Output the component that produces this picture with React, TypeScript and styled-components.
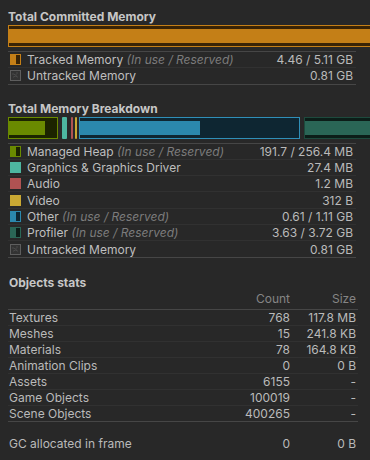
import React from "react";
import styled, { createGlobalStyle } from "styled-components";

const GlobalStyle = createGlobalStyle`
  html, body {
    margin: 0;
    padding: 0;
    background: #282828;
  }
  body {
    font-family: Inter, "Noto Sans", "Liberation Sans", sans-serif;
    font-size: 12px;
    color: #c2c2c2;
  }
`;

type Part = {
  w: number;
  ml?: number;
  color: string;
  dark?: string;
  border?: string;
  fill?: number;
};

const committed: Part[] = [
  { w: 900, color: "#c47f17", dark: "#3a2405", border: "#c47f17", fill: 100 },
];

const breakdown: Part[] = [
  { w: 50, color: "#6a8a00", dark: "#1c2400", border: "#6a8a00", fill: 74 },
  { w: 5, ml: 4, color: "#4db6a0" },
  { w: 2, ml: 4, color: "#b05252" },
  { w: 2, ml: 2, color: "#c9a833" },
  { w: 221, ml: 2, color: "#2b88ad", dark: "#0e2632", border: "#2f8fb8", fill: 55 },
  { w: 744, ml: 4, color: "#2a6656", dark: "#0c1d18", border: "#1d4a3d", fill: 98 },
];

type Legend = {
  label: string;
  note?: boolean;
  value: string;
  icon: { color: string; dark?: string } | "untracked";
};

const tracked: Legend[] = [
  { label: "Tracked Memory", note: true, value: "4.46 / 5.11 GB", icon: { color: "#c47f17", dark: "#3a2405" } },
  { label: "Untracked Memory", value: "0.81 GB", icon: "untracked" },
];

const legend: Legend[] = [
  { label: "Managed Heap", note: true, value: "191.7 / 256.4 MB", icon: { color: "#6a8a00", dark: "#1c2400" } },
  { label: "Graphics & Graphics Driver", value: "27.4 MB", icon: { color: "#4db6a0" } },
  { label: "Audio", value: "1.2 MB", icon: { color: "#b05252" } },
  { label: "Video", value: "312 B", icon: { color: "#c9a833" } },
  { label: "Other", note: true, value: "0.61 / 1.11 GB", icon: { color: "#2b88ad", dark: "#0e2632" } },
  { label: "Profiler", note: true, value: "3.63 / 3.72 GB", icon: { color: "#2a6656", dark: "#0c1d18" } },
  { label: "Untracked Memory", value: "0.81 GB", icon: "untracked" },
];

const stats = [
  ["Textures", "768", "117.8 MB"],
  ["Meshes", "15", "241.8 KB"],
  ["Materials", "78", "164.8 KB"],
  ["Animation Clips", "0", "0 B"],
  ["Assets", "6155", "-"],
  ["Game Objects", "100019", "-"],
  ["Scene Objects", "400265", "-"],
];

const Panel = styled.div`
  width: 370px;
  height: 460px;
  box-sizing: border-box;
  padding: 9px 14px 0 8px;
  overflow: hidden;
`;

const SectionTitle = styled.div<{ $top?: number; $inset?: number }>`
  font-weight: 700;
  line-height: 16px;
  color: #c6c6c6;
  margin-top: ${(p) => p.$top ?? 0}px;
  padding-left: ${(p) => p.$inset ?? 0}px;
`;

const BarTrack = styled.div`
  display: flex;
  height: 22px;
  margin-right: -14px;
  overflow: hidden;
`;

const Segment = styled.div<{ $w: number; $ml: number; $border: string; $dark: string }>`
  flex: 0 0 ${(p) => p.$w}px;
  margin-left: ${(p) => p.$ml}px;
  box-sizing: border-box;
  border: 1px solid ${(p) => p.$border};
  background: ${(p) => p.$dark};
  padding: 3px 0;
`;

const SegmentFill = styled.div<{ $color: string }>`
  height: 100%;
  background: ${(p) => p.$color};
`;

const SolidSegment = styled.div<{ $w: number; $ml: number; $color: string }>`
  flex: 0 0 ${(p) => p.$w}px;
  margin-left: ${(p) => p.$ml}px;
  border-radius: 1px;
  background: ${(p) => p.$color};
`;

const Rows = styled.div`
  margin-top: 4px;
  border-top: 1px solid #464646;
`;

const Row = styled.div`
  display: flex;
  align-items: center;
  height: 16.3px;
  box-sizing: border-box;
  padding: 0 3px 0 2px;
  border-bottom: 1px solid #313131;
  &:last-child {
    border-bottom-color: #464646;
  }
`;

const Swatch = styled.span<{ $color: string; $dark?: string }>`
  flex: 0 0 11px;
  height: 11px;
  box-sizing: border-box;
  border: 1px solid ${(p) => p.$color};
  background: ${(p) =>
    p.$dark
      ? `linear-gradient(to right, ${p.$color} 0 5px, ${p.$dark} 5px)`
      : p.$color};
`;

const Label = styled.span`
  flex: 1;
  margin-left: 6px;
  white-space: nowrap;
  line-height: 15px;
  color: #bfbfbf;
`;

const Note = styled.span`
  color: #7c7c7c;
  font-style: italic;
`;

const Value = styled.span`
  white-space: nowrap;
  color: #bababa;
  line-height: 15px;
`;

const StatsTable = styled.div`
  margin-right: -2px;
`;

const StatRow = styled.div<{ $head?: boolean }>`
  display: grid;
  grid-template-columns: 1fr 70px 66px;
  padding: ${(p) => (p.$head ? "0 2px 3px 1px" : "0 2px 0 1px")};
  height: ${(p) => (p.$head ? 19 : 16.1)}px;
  box-sizing: border-box;
  line-height: ${(p) => (p.$head ? 16 : 15)}px;
  border-bottom: 1px solid ${(p) => (p.$head ? "#464646" : "#313131")};
  color: ${(p) => (p.$head ? "#858585" : "#bababa")};
  &:last-child {
    border-bottom-color: #464646;
  }
`;

const Cell = styled.span<{ $right?: boolean }>`
  text-align: ${(p) => (p.$right ? "right" : "left")};
  white-space: nowrap;
`;

const GcRow = styled.div`
  display: grid;
  grid-template-columns: 1fr 70px 66px;
  margin: 14px -2px 0 0;
  padding: 0 2px 0 1px;
  line-height: 16px;
  color: #bababa;
`;

const UntrackedIcon = () => (
  <svg width="11" height="11" viewBox="0 0 11 11" style={{ flex: "0 0 11px" }}>
    <rect x="0.5" y="0.5" width="10" height="10" fill="#333" stroke="#5e5e5e" />
    <path d="M2 4h2l1 1h2M3 7h1l1-1h1l1 1h1M6 3h2" stroke="#4a4a4a" fill="none" />
  </svg>
);

const MemoryBar = ({ parts }: { parts: Part[] }) => (
  <BarTrack>
    {parts.map((p, i) =>
      p.dark ? (
        <Segment key={i} $w={p.w} $ml={p.ml ?? 0} $border={p.border ?? p.color} $dark={p.dark}>
          <SegmentFill $color={p.color} style={{ width: `${p.fill}%` }} />
        </Segment>
      ) : (
        <SolidSegment key={i} $w={p.w} $ml={p.ml ?? 0} $color={p.color} />
      )
    )}
  </BarTrack>
);

const LegendRows = ({ items }: { items: Legend[] }) => (
  <Rows>
    {items.map((it) => (
      <Row key={it.label}>
        {it.icon === "untracked" ? (
          <UntrackedIcon />
        ) : (
          <Swatch $color={it.icon.color} $dark={it.icon.dark} />
        )}
        <Label>
          {it.label}
          {it.note && <Note> (In use / Reserved)</Note>}
        </Label>
        <Value>{it.value}</Value>
      </Row>
    ))}
  </Rows>
);

export default function App() {
  return (
    <>
      <GlobalStyle />
      <Panel>
        <SectionTitle>Total Committed Memory</SectionTitle>
        <MemoryBar parts={committed} />
        <LegendRows items={tracked} />

        <SectionTitle $top={16}>Total Memory Breakdown</SectionTitle>
        <MemoryBar parts={breakdown} />
        <LegendRows items={legend} />

        <SectionTitle $top={17} $inset={1}>Objects stats</SectionTitle>
        <StatsTable>
          <StatRow $head>
            <Cell />
            <Cell $right>Count</Cell>
            <Cell $right>Size</Cell>
          </StatRow>
          {stats.map(([name, count, size]) => (
            <StatRow key={name}>
              <Cell>{name}</Cell>
              <Cell $right>{count}</Cell>
              <Cell $right>{size}</Cell>
            </StatRow>
          ))}
        </StatsTable>
        <GcRow>
          <Cell>GC allocated in frame</Cell>
          <Cell $right>0</Cell>
          <Cell $right>0 B</Cell>
        </GcRow>
      </Panel>
    </>
  );
}
